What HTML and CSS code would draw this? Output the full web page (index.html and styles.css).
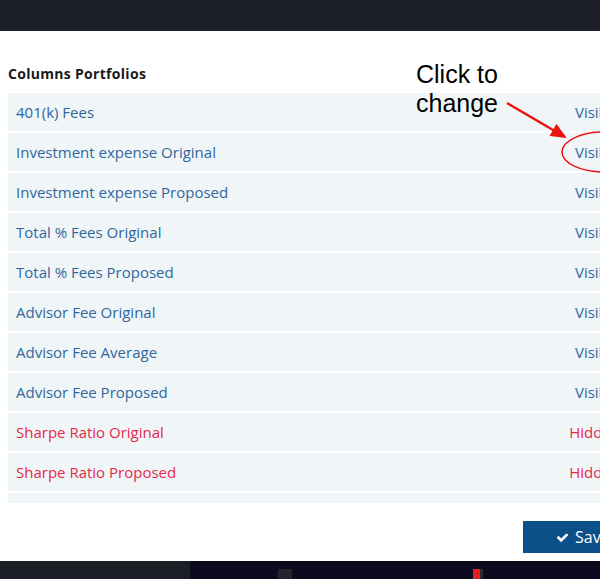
FILE: index.html
```html
<!DOCTYPE html>
<html lang="en">
<head>
<meta charset="utf-8">
<title>Columns Portfolios</title>
<link rel="stylesheet" href="styles.css">
</head>
<body>
<div class="topbar">
  <span class="seg"></span><span class="seg"></span><span class="seg"></span><span class="seg"></span>
</div>
<div class="modal">
  <h4 class="title">Columns Portfolios</h4>
  <div class="list">
    <div class="row"><span>401(k) Fees</span><span>Visible</span></div>
    <div class="row"><span>Investment expense Original</span><span>Visible</span></div>
    <div class="row"><span>Investment expense Proposed</span><span>Visible</span></div>
    <div class="row"><span>Total % Fees Original</span><span>Visible</span></div>
    <div class="row"><span>Total % Fees Proposed</span><span>Visible</span></div>
    <div class="row"><span>Advisor Fee Original</span><span>Visible</span></div>
    <div class="row"><span>Advisor Fee Average</span><span>Visible</span></div>
    <div class="row"><span>Advisor Fee Proposed</span><span>Visible</span></div>
    <div class="row hidden"><span>Sharpe Ratio Original</span><span>Hidden</span></div>
    <div class="row hidden"><span>Sharpe Ratio Proposed</span><span>Hidden</span></div>
    <div class="row"><span>Alpha Original</span><span>Visible</span></div>
  </div>
  <div class="footer">
    <button class="save"><svg class="check" viewBox="0 0 1792 1792" aria-hidden="true"><path d="M1671 566q0 40-28 68l-724 724-136 136q-28 28-68 28t-68-28l-136-136-362-362q-28-28-28-68t28-68l136-136q28-28 68-28t68 28l294 295 656-657q28-28 68-28t68 28l136 136q28 28 28 68z"/></svg>Save</button>
  </div>
  <div class="note">Click to<br>change</div>
  <svg class="mark" width="600" height="200" viewBox="0 0 600 200" aria-hidden="true">
    <defs>
      <marker id="ah" markerWidth="16" markerHeight="14" refX="14" refY="7" orient="auto" markerUnits="userSpaceOnUse" viewBox="0 0 16 14">
        <path d="M0 0 L16 7 L0 14 z" fill="#ee1111"/>
      </marker>
    </defs>
    <line x1="507" y1="72" x2="565" y2="106" stroke="#ee1111" stroke-width="2.5" marker-end="url(#ah)"/>
    <ellipse cx="604" cy="121" rx="42" ry="20" fill="none" stroke="#ee1111" stroke-width="1.5"/>
  </svg>
</div>
<div class="bottombar">
  <span class="b1"></span>
  <span class="b2"><i class="blk1"></i><i class="red"></i></span>
</div>
</body>
</html>
```
FILE: styles.css
```css
html, body {
  margin: 0;
  padding: 0;
}
body {
  width: 600px;
  height: 579px;
  overflow: hidden;
  background: #0b0a1e;
  font-family: "Open Sans", Lato, sans-serif;
}
.topbar {
  height: 31px;
  background: #1c1f27;
  display: flex;
}
.topbar .seg {
  width: 168px;
  border-right: 1px solid #20232b;
}
.modal {
  position: relative;
  height: 530px;
  width: 640px;
  background: #ffffff;
  padding-left: 8px;
  box-sizing: border-box;
}
.title {
  margin: 0;
  padding-top: 34px;
  height: 28px;
  font-size: 14px;
  font-weight: 700;
  letter-spacing: 0.3px;
  line-height: 18px;
  color: #1a1a1a;
}
.list {
  width: 620px;
  height: 410px;
  overflow: hidden;
  display: flex;
  flex-direction: column;
  gap: 2px;
}
.row {
  flex: 0 0 38px;
  display: flex;
  justify-content: space-between;
  align-items: center;
  padding: 0 8px;
  background: #f0f5f8;
  color: #2f679c;
  font-size: 15px;
}
.row.hidden {
  color: #e5294b;
}
.footer {
  padding-top: 18px;
  padding-left: 515px;
}
.save {
  display: flex;
  align-items: center;
  gap: 6px;
  height: 32px;
  width: 100px;
  padding: 0 0 0 33px;
  border: 0;
  background: #0b5088;
  color: #ffffff;
  font-family: "Open Sans", Lato, sans-serif;
  font-size: 16px;
}
.check {
  width: 13px;
  height: 13px;
  fill: #ffffff;
}
.note {
  position: absolute;
  left: 416px;
  top: 29px;
  font-family: "Liberation Sans", Arial, sans-serif;
  font-size: 25px;
  line-height: 29px;
  color: #000000;
}
.mark {
  position: absolute;
  left: 0;
  top: 0;
}
.bottombar {
  height: 18px;
  display: flex;
}
.b1 {
  width: 190px;
  background: #1b1e24;
}
.b2 {
  flex: 1;
  position: relative;
  background: #0b0a1e;
}
.b2 i {
  position: absolute;
  top: 8px;
  height: 10px;
}
.blk1 {
  left: 88px;
  width: 14px;
  background: #23232c;
}
.red {
  left: 283px;
  width: 7px;
  background: #e02020;
  border-right: 3px solid #2a2a33;
}
```
